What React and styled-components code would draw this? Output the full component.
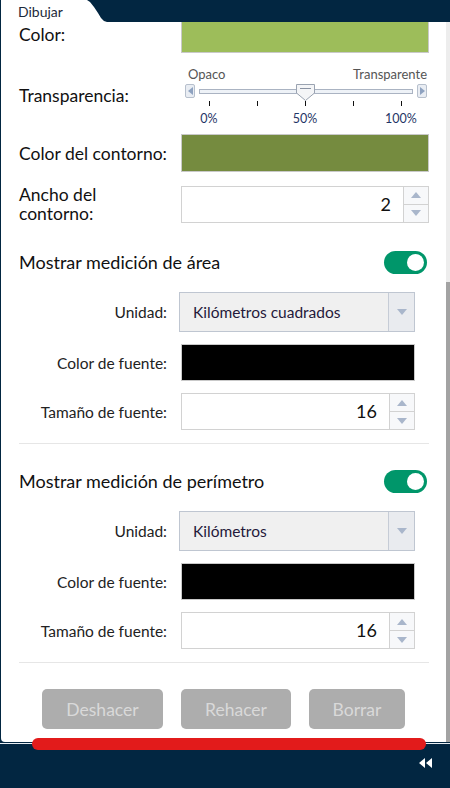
import React from "react";
import styled, { createGlobalStyle } from "styled-components";

const GlobalStyle = createGlobalStyle`
  html, body {
    margin: 0;
    padding: 0;
    background: #022641;
  }
  body {
    font-family: "Lato", "Open Sans", sans-serif;
    width: 450px;
    height: 788px;
    overflow: hidden;
  }
`;

const units = [
  { title: "Mostrar medición de área", unit: "Kilómetros cuadrados", gap: 9 },
  { title: "Mostrar medición de perímetro", unit: "Kilómetros", gap: 7 },
];

const buttons = [
  { label: "Deshacer", width: 121 },
  { label: "Rehacer", width: 110 },
  { label: "Borrar", width: 96 },
];

const Spinner = () => (
  <SpinBox>
    <SpinHalf>
      <Tri viewBox="0 0 10 6">
        <path d="M0 6 L5 0 L10 6 Z" />
      </Tri>
    </SpinHalf>
    <SpinHalf>
      <Tri viewBox="0 0 10 6">
        <path d="M0 0 L5 6 L10 0 Z" />
      </Tri>
    </SpinHalf>
  </SpinBox>
);

const Slider = () => (
  <SliderWrap>
    <SliderEnds>
      <span>Opaco</span>
      <span>Transparente</span>
    </SliderEnds>
    <SliderRow>
      <ArrowBtn>
        <svg width="5" height="8" viewBox="0 0 5 8">
          <path d="M5 0 L0 4 L5 8 Z" fill="#8ea2c0" />
        </svg>
      </ArrowBtn>
      <Track>
        <Thumb>
          <svg width="19" height="17" viewBox="0 0 19 17">
            <path
              d="M0.5 0.5 H18.5 V9 L9.5 16.5 L0.5 9 Z"
              fill="#f4f5f7"
              stroke="#9aa3b1"
            />
            <line x1="4" y1="4.5" x2="15" y2="4.5" stroke="#8a93a3" />
          </svg>
        </Thumb>
      </Track>
      <ArrowBtn>
        <svg width="5" height="8" viewBox="0 0 5 8">
          <path d="M0 0 L5 4 L0 8 Z" fill="#8ea2c0" />
        </svg>
      </ArrowBtn>
    </SliderRow>
    <Ticks>
      {["0%", "", "50%", "", "100%"].map((t, i) => (
        <TickCol key={i}>
          <Tick />
          <TickLabel>{t}</TickLabel>
        </TickCol>
      ))}
    </Ticks>
  </SliderWrap>
);

const App = () => {
  return (
    <>
      <GlobalStyle />
      <Page>
        <TabBar>
          <Tab>Dibujar</Tab>
        </TabBar>
        <Panel>
          <Scroller>
            <Content>
              <Row>
                <Label>Color:</Label>
                <Swatch color="#9dbd5a" />
              </Row>
              <Row gap={14}>
                <Label lift={3}>Transparencia:</Label>
                <Slider />
              </Row>
              <Row gap={8}>
                <Label>Color del contorno:</Label>
                <Swatch color="#758b3f" />
              </Row>
              <Row gap={13}>
                <Label>
                  Ancho del
                  <br />
                  contorno:
                </Label>
                <NumberBox>
                  <NumberValue>2</NumberValue>
                  <Spinner />
                </NumberBox>
              </Row>

              {units.map((u) => (
                <Section key={u.title} gap={u.gap}>
                  <SectionHead>
                    <SectionTitle>{u.title}</SectionTitle>
                    <Toggle>
                      <Knob />
                    </Toggle>
                  </SectionHead>
                  <SubRow>
                    <SubLabel>Unidad:</SubLabel>
                    <Select>
                      <SelectText>{u.unit}</SelectText>
                      <SelectArrow>
                        <Tri viewBox="0 0 10 6">
                          <path d="M0 0 L5 6 L10 0 Z" />
                        </Tri>
                      </SelectArrow>
                    </Select>
                  </SubRow>
                  <SubRow>
                    <SubLabel>Color de fuente:</SubLabel>
                    <Swatch color="#000000" />
                  </SubRow>
                  <SubRow>
                    <SubLabel>Tamaño de fuente:</SubLabel>
                    <NumberBox>
                      <NumberValue>16</NumberValue>
                      <Spinner />
                    </NumberBox>
                  </SubRow>
                </Section>
              ))}

              <Buttons>
                {buttons.map((b) => (
                  <ActionButton key={b.label} width={b.width}>
                    {b.label}
                  </ActionButton>
                ))}
              </Buttons>
            </Content>
          </Scroller>
          <ScrollTrack>
            <ScrollThumb />
          </ScrollTrack>
          <RedBar />
        </Panel>
        <Footer>
          <svg width="13" height="10" viewBox="0 0 13 10">
            <path d="M6 0 L0 5 L6 10 Z M13 0 L7 5 L13 10 Z" fill="#ffffff" />
          </svg>
        </Footer>
      </Page>
    </>
  );
};

const Page = styled.div`
  width: 450px;
  height: 788px;
  background: #022641;
  display: flex;
  flex-direction: column;
`;

const TabBar = styled.div`
  height: 22px;
  display: flex;
  padding-left: 1px;
`;

const Tab = styled.div`
  width: 106px;
  height: 22px;
  background: #fff;
  color: #1d2a3a;
  font-size: 14px;
  line-height: 24px;
  padding-left: 17px;
  box-sizing: border-box;
  clip-path: polygon(
    0 0,
    86px 0,
    89px 2px,
    93px 7px,
    97px 13px,
    100px 18px,
    103px 21px,
    106px 22px,
    0 22px
  );
`;

const Panel = styled.div`
  position: relative;
  height: 720px;
  margin-left: 1px;
  background: #fff;
  border-bottom-left-radius: 4px;
  display: flex;
`;

const Scroller = styled.div`
  flex: 1;
  overflow: hidden;
`;

const Content = styled.div`
  margin-top: -7px;
  padding: 0 17px 0 18px;
`;

const Row = styled.div`
  display: flex;
  align-items: center;
  justify-content: space-between;
  margin-top: ${(p) => p.gap || 0}px;
`;

const Label = styled.div`
  font-size: 17.5px;
  line-height: 19px;
  color: #111;
  margin-top: ${(p) => -(p.lift || 0)}px;
`;

const Swatch = styled.div`
  width: 248px;
  height: 38px;
  box-sizing: border-box;
  background: ${(p) => p.color};
  border: 1px solid #c9c9c9;
`;

const SliderWrap = styled.div`
  width: 244px;
  margin-right: 2px;
  display: flex;
  flex-direction: column;
`;

const SliderEnds = styled.div`
  display: flex;
  justify-content: space-between;
  font-size: 13px;
  line-height: 14px;
  color: #555;
  padding-left: 5px;
`;

const SliderRow = styled.div`
  display: flex;
  align-items: center;
  gap: 4px;
  margin-top: 3px;
  padding-left: 2px;
`;

const ArrowBtn = styled.div`
  width: 10px;
  height: 14px;
  box-sizing: border-box;
  border: 1px solid #b7c0cd;
  border-radius: 2px;
  background: #e9edf3;
  display: flex;
  align-items: center;
  justify-content: center;
`;

const Track = styled.div`
  position: relative;
  flex: 1;
  height: 5px;
  box-sizing: border-box;
  border: 1px solid #aab3c2;
  background: #eef2f7;
`;

const Thumb = styled.div`
  position: absolute;
  left: 96px;
  top: -6px;
  line-height: 0;
`;

const Ticks = styled.div`
  display: grid;
  grid-template-columns: repeat(5, 48px);
  margin: 3px 0 0 2px;
`;

const TickCol = styled.div`
  display: flex;
  flex-direction: column;
  align-items: center;
`;

const Tick = styled.div`
  width: 1px;
  height: 5px;
  background: #111;
`;

const TickLabel = styled.div`
  height: 14px;
  margin-top: 6px;
  font-size: 12.5px;
  line-height: 14px;
  color: #1f3566;
  white-space: nowrap;
`;

const NumberBox = styled.div`
  width: 248px;
  height: 37px;
  box-sizing: border-box;
  border: 1px solid #d2d2d2;
  background: #fff;
  display: flex;
  align-items: stretch;
  flex-shrink: 0;
`;

const NumberValue = styled.div`
  flex: 1;
  text-align: right;
  padding-right: 12px;
  font-size: 18px;
  line-height: 35px;
  color: #111;
`;

const SpinBox = styled.div`
  width: 24px;
  border-left: 1px solid #d2d2d2;
  display: flex;
  flex-direction: column;
  background: #f7f8fa;
`;

const SpinHalf = styled.div`
  flex: 1;
  display: flex;
  align-items: center;
  justify-content: center;
  & + & {
    border-top: 1px solid #d2d2d2;
  }
`;

const Tri = styled.svg`
  width: 10px;
  height: 6px;
  fill: #a9b6cb;
`;

const Section = styled.div`
  padding-bottom: 13px;
  border-bottom: 1px solid #e6e6e6;
  margin-top: ${(p) => p.gap}px;
`;

const SectionHead = styled.div`
  display: flex;
  align-items: center;
  justify-content: space-between;
  height: 56px;
  padding-top: 4px;
  box-sizing: border-box;
  margin-bottom: 4px;
`;

const SectionTitle = styled.div`
  font-size: 18px;
  color: #111;
`;

const Toggle = styled.div`
  width: 43px;
  height: 23px;
  border-radius: 12px;
  background: #00966a;
  margin-right: 2px;
  display: flex;
  align-items: center;
  justify-content: flex-end;
  padding-right: 3px;
  box-sizing: border-box;
`;

const Knob = styled.div`
  width: 17px;
  height: 17px;
  border-radius: 50%;
  background: #fff;
`;

const SubRow = styled.div`
  display: grid;
  grid-template-columns: 148px 234px;
  column-gap: 14px;
  align-items: center;
  margin-bottom: 12px;
  &:last-child {
    margin-bottom: 0;
  }
  & > ${Swatch} {
    width: 234px;
    height: 37px;
  }
  & > ${NumberBox} {
    width: 234px;
  }
`;

const SubLabel = styled.div`
  text-align: right;
  font-size: 15.5px;
  color: #222;
`;

const Select = styled.div`
  height: 40px;
  margin-left: -2px;
  box-sizing: border-box;
  border: 1px solid #bfc6d1;
  background: #f0f0f0;
  display: flex;
  align-items: stretch;
`;

const SelectText = styled.div`
  flex: 1;
  padding-left: 13px;
  font-size: 15.5px;
  line-height: 38px;
  color: #24183a;
`;

const SelectArrow = styled.div`
  width: 25px;
  border-left: 1px solid #c6ccd6;
  background: #e9ebef;
  display: flex;
  align-items: center;
  justify-content: center;
`;

const Buttons = styled.div`
  display: flex;
  gap: 18px;
  padding: 26px 0 0 23px;
`;

const ActionButton = styled.button`
  width: ${(p) => p.width}px;
  height: 40px;
  padding: 0;
  border: none;
  border-radius: 5px;
  background: #adadad;
  color: #d9d9d9;
  font-family: "Lato", "Open Sans", sans-serif;
  font-size: 17.5px;
`;

const ScrollTrack = styled.div`
  width: 4px;
  background: #ededed;
  display: flex;
  flex-direction: column;
  justify-content: flex-end;
`;

const ScrollThumb = styled.div`
  height: 460px;
  background: #a3a3a3;
`;

const RedBar = styled.div`
  position: absolute;
  left: 31px;
  width: 394px;
  bottom: -8px;
  height: 12px;
  border-radius: 6px;
  background: #e21b1b;
`;

const Footer = styled.div`
  flex: 1;
  display: flex;
  justify-content: flex-end;
  padding: 14px 18px 0 0;
  border-top: 1px solid #e8eef3;
  margin-top: 1px;
`;

export default App;
